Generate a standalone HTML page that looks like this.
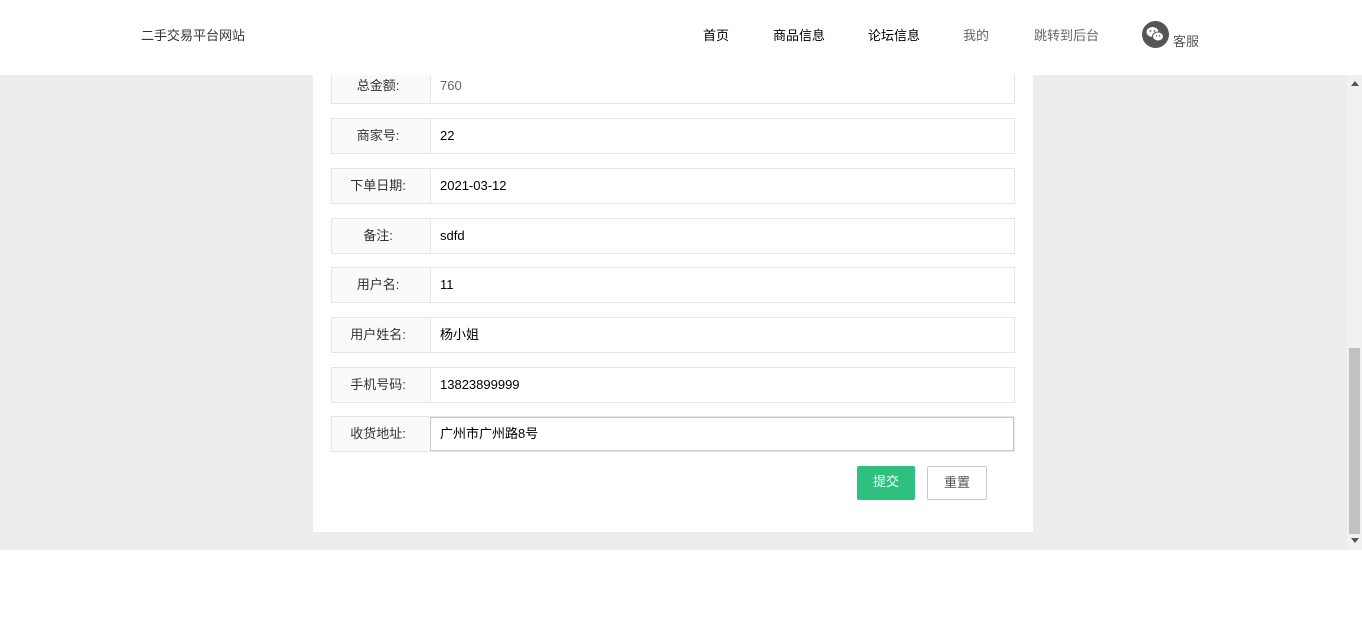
<!DOCTYPE html>
<html><head><meta charset="utf-8"><style>
*{margin:0;padding:0;box-sizing:border-box}
body{width:1362px;height:618px;overflow:hidden;background:#fff;font-family:"Liberation Sans","Noto Sans CJK SC",sans-serif;font-size:13px;color:#333;position:relative}
.hdr{position:absolute;left:0;top:0;width:1362px;height:75px;background:#fff;z-index:4}
.hdr span{position:absolute;top:25px;font-size:13px}
.gray{position:absolute;left:0;top:75px;width:1347px;height:475px;background:#ededed}
.sb{position:absolute;left:1347px;top:75px;width:15px;height:475px;background:#f1f1f1}
.thumb{position:absolute;left:1349px;top:348px;width:11px;height:186px;background:#c1c1c1}
.panel{position:absolute;left:313px;top:75px;width:720px;height:457px;background:#fff}
.row{position:absolute;left:331px;width:684px;height:36px;border:1px solid #e6e6e6;background:#fff}
.lab{position:absolute;left:0;top:0;width:99px;height:34px;background:#fafafa;border-right:1px solid #e6e6e6;text-align:center;line-height:33px;color:#333;padding-right:6px}
.val{position:absolute;left:108px;top:0;line-height:34px;color:#000}
.btn{position:absolute;top:466px;height:34px;line-height:32px;text-align:center;font-size:13px;border-radius:2px}
</style></head><body>
<div class="gray"></div>
<div class="sb"></div><div class="thumb"></div>
<div style="position:absolute;left:1351px;top:81px;border:4px solid transparent;border-bottom:5px solid #555;border-top:0"></div>
<div style="position:absolute;left:1351px;top:538px;border:4px solid transparent;border-top:5px solid #555;border-bottom:0"></div>
<div class="panel"></div>
<div class="row" style="top:68px"><div class="lab">总金额:</div><div class="val" style="color:#666">760</div></div>
<div class="row" style="top:118px"><div class="lab">商家号:</div><div class="val">22</div></div>
<div class="row" style="top:168px"><div class="lab">下单日期:</div><div class="val">2021-03-12</div></div>
<div class="row" style="top:218px"><div class="lab">备注:</div><div class="val">sdfd</div></div>
<div class="row" style="top:267px"><div class="lab">用户名:</div><div class="val">11</div></div>
<div class="row" style="top:317px"><div class="lab">用户姓名:</div><div class="val">杨小姐</div></div>
<div class="row" style="top:367px"><div class="lab">手机号码:</div><div class="val">13823899999</div></div>
<div class="row" style="top:416px"><div class="lab">收货地址:</div><div class="val">广州市广州路8号</div><div style="position:absolute;left:98px;top:0;width:584px;height:34px;border:1px solid #c8c8c8"></div></div>
<div class="btn" style="left:857px;width:58px;background:#2ec07e;color:#fff">提交</div>
<div class="btn" style="left:927px;width:60px;border:1px solid #c9c9c9;color:#555;background:#fff">重置</div>
<div class="hdr">
<span style="left:141px">二手交易平台网站</span>
<span style="left:703px;color:#000">首页</span>
<span style="left:773px;color:#000">商品信息</span>
<span style="left:868px;color:#000">论坛信息</span>
<span style="left:963px;color:#666">我的</span>
<span style="left:1034px;color:#666">跳转到后台</span>
<svg style="position:absolute;left:1142px;top:21px" width="27" height="27" viewBox="0 0 27 27"><circle cx="13.5" cy="13.5" r="13.5" fill="#555"/><ellipse cx="10.5" cy="11" rx="6" ry="5" fill="#fff"/><ellipse cx="16" cy="15.5" rx="5.5" ry="4.5" fill="#fff" stroke="#555" stroke-width="1"/><circle cx="8.5" cy="10" r=".9" fill="#555"/><circle cx="12.5" cy="10" r=".9" fill="#555"/><circle cx="14.5" cy="15" r=".7" fill="#555"/><circle cx="17.5" cy="15" r=".7" fill="#555"/></svg>
<span style="left:1173px;top:31px;color:#555">客服</span>
</div>
</body></html>
